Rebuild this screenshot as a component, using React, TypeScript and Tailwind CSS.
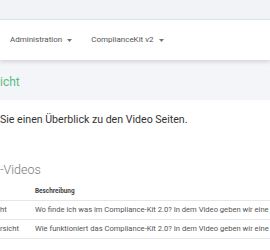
import React from "react";

function Caret() {
  return (
    <svg width="5" height="3" viewBox="0 0 5 3" className="ml-[5px]">
      <path d="M0 0 L5 0 L2.5 3 Z" fill="#777" />
    </svg>
  );
}

export default function App() {
  return (
    <div className="w-[270px] h-[250px] overflow-hidden bg-white font-['Roboto','Liberation_Sans',sans-serif]">
      <div className="h-[20px] bg-[#f1f3f6] border-b border-[#dde3ea]" />
      <nav className="relative z-10 h-[40px] bg-white shadow-[0_2px_4px_rgba(0,0,0,0.13)] flex items-center pl-[10px] text-[8px] text-[#555]">
        <span className="flex items-center">
          Administration
          <Caret />
        </span>
        <span className="flex items-center ml-[19px]">
          ComplianceKit v2
          <Caret />
        </span>
      </nav>
      <div className="h-[40px] bg-[#f3f5f8] flex items-center pt-[3px] text-[12px] text-[#5cbb88]">
        icht
      </div>
      <p className="mt-[13px] h-[14px] leading-[14px] text-[10.6px] text-[#333] whitespace-nowrap">
        Sie einen Überblick zu den Video Seiten.
      </p>
      <h2 className="mt-[34px] h-[18px] leading-[18px] text-[12.5px] font-light text-[#777]">
        -Videos
      </h2>
      <div className="text-[7.6px] whitespace-nowrap overflow-hidden">
        <div className="h-[22px] flex items-center pt-[4px] border-b border-[#e3e6ea]">
          <div className="w-[35px] shrink-0" />
          <div className="font-bold text-[6.4px] text-[#444]">Beschreibung</div>
        </div>
        <div className="h-[19px] flex items-center border-b border-[#e3e6ea] text-[#555]">
          <div className="w-[35px] shrink-0">ht</div>
          <div className="truncate">Wo finde ich was im Compliance-Kit 2.0? In dem Video geben wir eine</div>
        </div>
        <div className="h-[19px] flex items-center border-b border-[#e3e6ea] text-[#555]">
          <div className="w-[35px] shrink-0">rsicht</div>
          <div className="truncate">Wie funktioniert das Compliance-Kit 2.0? In dem Video geben wir eine</div>
        </div>
      </div>
    </div>
  );
}
